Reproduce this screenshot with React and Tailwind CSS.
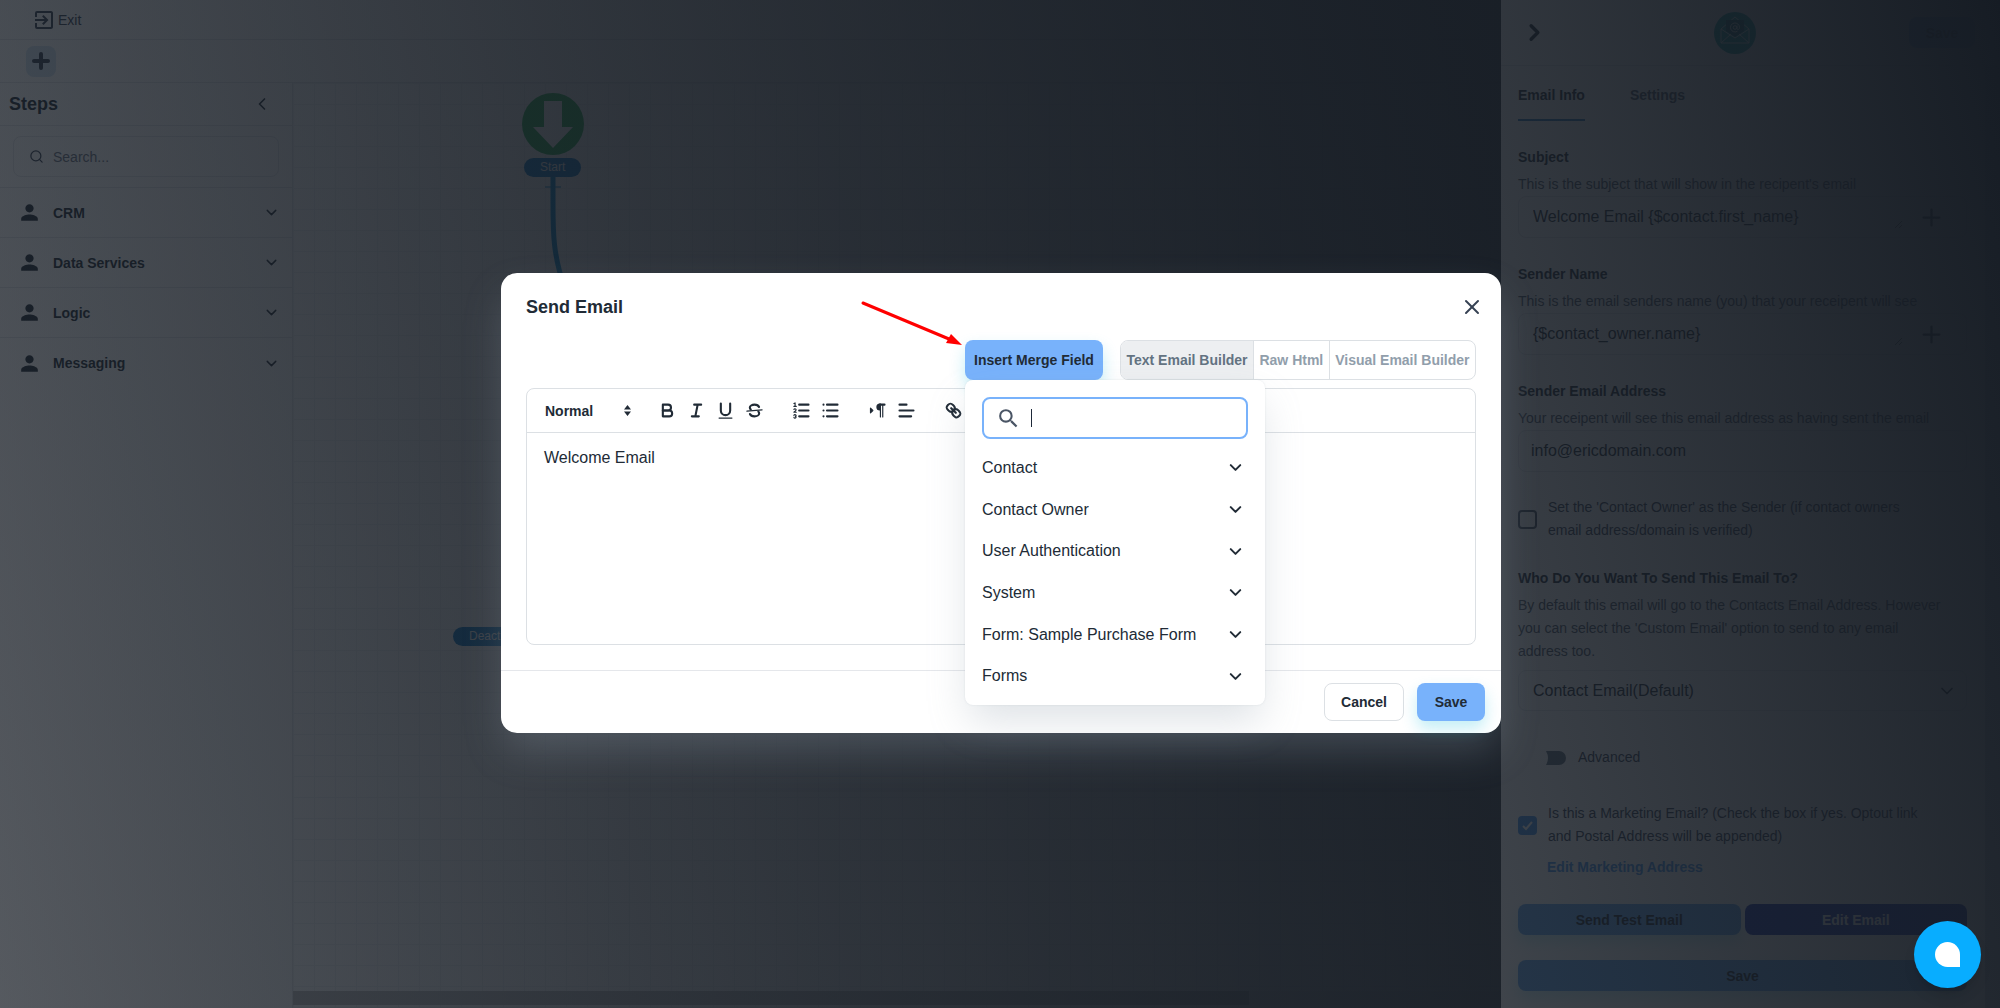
import React, { useState } from 'react';
import { MdOutlineExitToApp, MdPerson, MdSearch } from 'react-icons/md';
import { ChevronDown, ChevronLeft, ChevronRight, Plus, Search, X } from 'lucide-react';

const steps = ['CRM', 'Data Services', 'Logic', 'Messaging'];

const mergeGroups = [
    'Contact',
    'Contact Owner',
    'User Authentication',
    'System',
    'Form: Sample Purchase Form',
    'Forms',
];

const tabs = ['Text Email Builder', 'Raw Html', 'Visual Email Builder'];

// Both the drawer and the dialog dim what lies below them with this
const Backdrop = () => (
    <div className="absolute inset-0 bg-[linear-gradient(75deg,rgba(22,28,36,0.48)_0%,rgba(22,28,36,1)_100%)]" />
);

const Sidebar = () => (
    <aside className="w-[293px] shrink-0 border-r border-gray-200">
        <div className="flex h-[43px] items-center justify-between border-b border-gray-200 pl-[9px] pr-[20px]">
            <h2 className="text-lg font-bold">Steps</h2>
            <button aria-label="Collapse steps"><ChevronLeft size={20} /></button>
        </div>
        <div className="border-b border-gray-200 px-[13px] py-[10px]">
            <label className="flex h-[41px] items-center gap-[9px] rounded-lg border border-gray-200 px-[15px]">
                <Search size={15} className="shrink-0 text-gray-700" />
                <input className="w-full text-sm outline-none placeholder:text-gray-500" aria-label="Search steps" placeholder="Search..." />
            </label>
        </div>
        {steps.map((step) => (
            <button key={step} className="flex h-[50px] w-full items-center border-b border-gray-200 pl-[17px] pr-[12px] text-sm font-bold last:border-b-0">
                <MdPerson size={25} className="mr-[11px]" />
                {step}
                <ChevronDown size={17} className="ml-auto" />
            </button>
        ))}
    </aside>
);

const Canvas = () => (
    <div className="relative flex flex-1 flex-col justify-end bg-[linear-gradient(to_right,#f0f3f5_1px,transparent_1px),linear-gradient(to_bottom,#f0f3f5_1px,transparent_1px)] bg-[size:21px_21px]">
        <svg className="absolute left-[228px] top-[10px]" width="64" height="200" viewBox="0 0 64 200" fill="none">
            <path d="M32 82V110C32 140 32 162 44 196" stroke="#0288d1" strokeWidth="5" />
            <path d="M24 94H40" stroke="#0288d1" strokeWidth="1" />
            <circle cx="32" cy="31" r="31" fill="#22b14c" />
            <path d="M23 8H41V34H52L32 55L12 34H23Z" fill="#fff" />
        </svg>
        <span className="absolute left-[231px] top-[75px] rounded-full bg-[#0d7ac9] px-[16px] text-xs leading-[19px] text-white">Start</span>
        <span className="absolute left-[160px] top-[544px] rounded-full bg-[#0d7ac9] px-[16px] text-xs leading-[19px] text-white">Deactivated</span>
        <div className="mb-[3px] h-[14px] bg-[#f1f1f1]">
            <div className="h-full w-[56%] bg-[#c1c1c1]" />
        </div>
    </div>
);

const Workspace = () => (
    <div className="flex h-full flex-col">
        <header className="flex h-10 shrink-0 items-center border-b border-gray-200 px-8">
            <a href="#exit" className="flex items-center gap-[2px] text-sm text-gray-700">
                <MdOutlineExitToApp size={24} />
                Exit
            </a>
        </header>
        <div className="flex h-[43px] shrink-0 items-center border-b border-gray-200 px-[26px]">
            <button aria-label="Add" className="flex h-[31px] w-[30px] items-center justify-center rounded-lg bg-[#d5e6f5] text-gray-700">
                <Plus size={24} strokeWidth={4} />
            </button>
        </div>
        <div className="flex flex-1">
            <Sidebar />
            <Canvas />
        </div>
    </div>
);

const MergeInput = ({ label, hint, value }) => (
    <label className="block">
        <span className="block text-sm font-bold leading-[31px]">{label}</span>
        <span className="block text-sm leading-[23px] text-gray-600">{hint}</span>
        <span className="flex h-[42px] items-center rounded-lg border border-gray-200 pl-[14px]">
            <textarea rows={1} defaultValue={value} className="h-6 w-[370px] resize leading-6 outline-none" />
            <Plus size={27} strokeWidth={2} className="ml-[15px] shrink-0" />
        </span>
    </label>
);

const CheckRow = ({ checked, children }) => (
    <label className="flex items-center gap-[11px] pr-[42px] text-sm leading-[23px] text-gray-700">
        <span className="relative flex shrink-0">
            <input type="checkbox" defaultChecked={checked} className="peer size-[19px] appearance-none rounded border-2 border-gray-600 checked:border-[#4a98ee] checked:bg-[#4a98ee]" />
            <svg className="pointer-events-none absolute inset-0 hidden peer-checked:block" viewBox="0 0 19 19" fill="none">
                <path d="M5 10L8 13L14 6" stroke="#fff" strokeWidth="2" />
            </svg>
        </span>
        <span>{children}</span>
    </label>
);

const Drawer = () => (
    <aside className="absolute inset-y-0 right-0 flex w-[499px] flex-col bg-white">
        <div className="flex h-[66px] shrink-0 items-center justify-between border-b border-gray-200 pl-[20px] pr-[25px]">
            <button aria-label="Close panel"><ChevronRight size={27} strokeWidth={3} /></button>
            <svg className="ml-[12px]" width="42" height="42" viewBox="0 0 42 42" fill="none">
                <circle cx="21" cy="21" r="21" fill="#0aa5a0" />
                <path d="M7 17L21 5L35 17V31H7Z" stroke="#e0f2f1" />
                <path d="M12 8H30V19L21 25L12 19Z" fill="#0b6673" />
                <path d="M7 31L17 22M35 31L25 22M7 17L21 26L35 17" stroke="#e0f2f1" />
                <circle cx="21" cy="15.5" r="1.8" stroke="#e0f2f1" />
                <path d="M23 13.500V17C24 18.500 25.500 17 25.500 15.500A4.500 4.500 0 1 0 23.500 19.200" stroke="#e0f2f1" />
            </svg>
            <button className="h-[31px] w-[66px] rounded-lg bg-[#78b2fb] text-sm font-bold">Save</button>
        </div>
        <div className="flex flex-1">
            <div className="flex-1 pl-[17px] pr-[18px]">
                <div className="flex h-[55px] items-stretch gap-[45px] text-sm font-bold">
                    <button className="border-b-2 border-[#2b7bbd] pt-[4px]">Email Info</button>
                    <button className="border-b-2 border-transparent pt-[4px] text-gray-600">Settings</button>
                </div>
                <div className="mt-[21px] flex flex-col gap-[21px]">
                    <MergeInput label="Subject" hint="This is the subject that will show in the recipent's email" value="Welcome Email {$contact.first_name}" />
                    <MergeInput label="Sender Name" hint="This is the email senders name (you) that your receipent will see" value="{$contact_owner.name}" />
                    <label className="block">
                        <span className="block text-sm font-bold leading-[31px]">Sender Email Address</span>
                        <span className="block text-sm leading-[23px] text-gray-600">Your receipent will see this email address as having sent the email</span>
                        <input defaultValue="info@ericdomain.com" className="h-[42px] w-full rounded-lg border border-gray-200 px-3 outline-none" />
                    </label>
                </div>
                <div className="mt-[24px]">
                    <CheckRow>Set the 'Contact Owner' as the Sender (if contact owners email address/domain is verified)</CheckRow>
                </div>
                <label className="mt-[21px] block">
                    <span className="block text-sm font-bold leading-[31px]">Who Do You Want To Send This Email To?</span>
                    <span className="block pr-6 text-sm leading-[23px] text-gray-600">By default this email will go to the Contacts Email Address. However you can select the 'Custom Email' option to send to any email address too.</span>
                    <span className="relative mt-[7px] block">
                        <select className="h-[41px] w-full appearance-none rounded-lg border border-gray-200 px-[14px] outline-none">
                            <option>Contact Email(Default)</option>
                        </select>
                        <ChevronDown size={20} className="pointer-events-none absolute right-[10px] top-[11px]" />
                    </span>
                </label>
                <button className="mt-[35px] flex items-center gap-[12px] pl-[28px] text-sm leading-[23px] text-gray-700">
                    <svg width="20" height="14" viewBox="0 0 20 14" fill="#637381">
                        <path d="M0 0H13A7 7 0 0 1 13 14H0Q4 7 0 0Z" />
                    </svg>
                    Advanced
                </button>
                <div className="mt-[33px]">
                    <CheckRow checked>Is this a Marketing Email? (Check the box if yes. Optout link and Postal Address will be appended)</CheckRow>
                </div>
                <a href="#address" className="mt-[8px] block pl-[29px] text-sm font-bold leading-[23px] text-[#4a98ee]">Edit Marketing Address</a>
                <div className="mt-[25px] grid grid-cols-2 gap-x-1 gap-y-[25px] text-sm font-bold">
                    <button className="h-[31px] rounded-lg bg-[#66a8ee] shadow-[0_8px_16px_rgba(0,184,217,0.2)]">Send Test Email</button>
                    <button className="h-[31px] rounded-lg bg-[#2038b0] text-white">Edit Email</button>
                    <button className="col-span-2 h-[31px] rounded-lg bg-[#66a8ee] shadow-[0_8px_16px_rgba(0,184,217,0.2)]">Save</button>
                </div>
            </div>
            <div className="w-[15px] bg-gray-300" />
        </div>
    </aside>
);

const MergeMenu = () => (
    <div className="absolute left-0 top-full z-10 w-[300px] rounded-lg bg-white px-[17px] pb-[8px] pt-[17px] shadow-[0_20px_40px_-4px_rgba(145,158,171,0.3),0_0_2px_rgba(145,158,171,0.24)]">
        <label className="flex h-[42px] items-center gap-[10px] rounded-lg border-2 border-[#78b2fb] px-[12px]">
            <MdSearch size={25} className="shrink-0 text-gray-600" />
            <span className="h-[18px] w-px shrink-0 bg-gray-800" />
            <input aria-label="Search merge fields" className="w-full outline-none" />
        </label>
        <ul className="mt-[8px] flex h-[250px] flex-col">
            {mergeGroups.map((group) => (
                <li key={group} className="flex-1">
                    <button className="flex h-full w-full items-center justify-between pr-[3px]">
                        {group}
                        <ChevronDown size={19} strokeWidth={2.5} />
                    </button>
                </li>
            ))}
        </ul>
    </div>
);

const ToolButton = ({ label, children }) => (
    <button aria-label={label}>
        <svg width="21" height="21" viewBox="0 0 18 18" fill="none" stroke="currentColor" strokeWidth="1.8" strokeLinecap="round" strokeLinejoin="round">
            {children}
        </svg>
    </button>
);

const Toolbar = () => (
    <div className="flex h-[44px] items-center gap-[26px] border-b border-[#dce0e4] pl-[18px]">
        <button className="flex w-[86px] items-center justify-between text-sm font-bold">
            Normal
            <svg width="7" height="11" viewBox="0 0 7 11" fill="currentColor">
                <path d="M3.5 0L7 4.5H0ZM3.5 11L0 6.5H7Z" />
            </svg>
        </button>
        <div className="flex gap-[8px]">
            <ToolButton label="Bold">
                <path d="M5 4H9.500A2.500 2.500 0 0 1 9.500 9H5Z" />
                <path d="M5 9H10.500A2.500 2.500 0 0 1 10.500 14H5Z" />
            </ToolButton>
            <ToolButton label="Italic">
                <path d="M7 4H13M5 14H11M8 14L10 4" />
            </ToolButton>
            <ToolButton label="Underline">
                <path d="M5 3V9A4 4 0 0 0 13 9V3" />
                <path d="M3.500 15.500H14.500" strokeWidth="1" />
            </ToolButton>
            <ToolButton label="Strike">
                <path d="M15.500 8.500L2.500 9.500" strokeWidth="1" />
                <path d="M12.900 6C12.400 4.700 10.900 4 9 4C6.700 4 5 5.200 5 6.500C5 7.300 5.300 7.800 5.800 8.100M12.300 10C12.800 10.400 13 10.900 13 11.500C13 12.800 11.300 14 9 14C7.100 14 5.600 13.300 5.100 12" />
            </ToolButton>
        </div>
        <div className="flex gap-[8px]">
            <ToolButton label="Numbered list">
                <path d="M7 4H15M7 9H15M7 14H15" />
                <path d="M2.500 5.500H4.500M3.500 5.500V2.500L2.500 3M4.500 10.500H2.500C2.500 10.266 4.350 9.424 4.350 8.266A0.959 0.959 0 0 0 2.500 8.156M2.500 14.846A0.959 0.959 0 0 0 4.350 14.737A0.700 0.700 0 0 0 3.750 14A0.688 0.688 0 0 0 4.350 13.264A0.959 0.959 0 0 0 2.500 13.155" strokeWidth="1" />
            </ToolButton>
            <ToolButton label="Bulleted list">
                <path d="M6 4H15M6 9H15M6 14H15M3 4H3.010M3 9H3.010M3 14H3.010" />
            </ToolButton>
        </div>
        <div className="flex gap-[8px]">
            <ToolButton label="Text direction">
                <path d="M3 11L5 9L3 7Z" fill="currentColor" strokeWidth="1" />
                <path d="M11 3A3 3 0 0 0 11 9H12V3Z" fill="currentColor" stroke="none" />
                <path d="M11 4H15" />
                <path d="M11.500 4.500V14.500M13.500 4.500V14.500" strokeWidth="1" />
            </ToolButton>
            <ToolButton label="Align">
                <path d="M3 4H9M3 9H15M3 14H13" />
            </ToolButton>
        </div>
        <ToolButton label="Link">
            <path d="M7 7L11 11" />
            <path d="M8.900 4.577A3.476 3.476 0 0 1 9.260 9.256A3.476 3.476 0 0 1 4.577 8.900C3.185 7.500 2.035 6.400 4.217 4.217S7.500 3.185 8.900 4.577Z" />
            <path d="M13.423 9.100A3.476 3.476 0 0 0 8.744 8.740A3.476 3.476 0 0 0 9.104 13.419C10.496 14.811 11.604 15.961 13.783 13.779S14.815 10.500 13.423 9.100Z" />
        </ToolButton>
    </div>
);

const EmailDialog = () => {
    const [tab, setTab] = useState('Text Email Builder');

    return (
        <section role="dialog" aria-label="Send Email" className="relative w-full max-w-[1000px] rounded-2xl bg-white shadow-[0_20px_40px_-4px_rgba(145,158,171,0.3)]">
            <div className="flex h-[67px] items-center justify-between pl-[25px] pr-[17px]">
                <h1 className="text-lg font-bold">Send Email</h1>
                <button aria-label="Close"><X size={24} className="text-gray-700" /></button>
            </div>
            <div className="flex justify-end gap-[17px] px-[25px]">
                <div className="relative">
                    <button className="h-10 w-[138px] rounded-lg bg-[#78b2fb] text-sm font-bold shadow-[0_8px_16px_rgba(0,184,217,0.24)]">Insert Merge Field</button>
                    <MergeMenu />
                </div>
                <div className="flex h-10 w-[356px] overflow-hidden rounded-lg border border-[#dce0e4] text-sm font-bold text-[#919eab]">
                    {tabs.map((name) => (
                        <button
                            key={name}
                            onClick={() => setTab(name)}
                            className={`grow whitespace-nowrap border-r border-[#dce0e4] px-1 last:border-r-0 ${tab === name ? 'bg-[#edeff1] text-[#637381]' : ''}`}
                        >
                            {name}
                        </button>
                    ))}
                </div>
            </div>
            <div className="mx-[25px] mt-[8px] rounded-lg border border-[#dce0e4]">
                <Toolbar />
                <textarea aria-label="Email body" defaultValue="Welcome Email" className="block h-[211px] w-full resize-none px-[17px] py-[13px] leading-6 outline-none" />
            </div>
            <div className="mt-[25px] flex justify-end gap-[13px] border-t border-gray-200 px-[16px] pb-[12px] pt-[12px] text-sm font-bold">
                <button className="h-[38px] rounded-lg border border-[#dce0e4] px-[16px]">Cancel</button>
                <button className="h-[38px] w-[68px] rounded-lg bg-[#78b2fb] shadow-[0_8px_16px_rgba(0,184,217,0.24)]">Save</button>
            </div>
            {/* Pointer to the merge field button */}
            <svg className="absolute left-[360px] top-[28px]" width="102" height="46" viewBox="0 0 102 46">
                <path d="M2 2L88 38" stroke="#f00" strokeWidth="3" strokeLinecap="round" />
                <path d="M101 44L85 42L90 33Z" fill="#f00" />
            </svg>
        </section>
    );
};

const App = () => (
    <div className="relative h-screen overflow-hidden bg-white font-['Liberation_Sans',Arial,sans-serif] text-base text-[#212b36]">
        <Workspace />
        <Backdrop />
        <Drawer />
        <Backdrop />
        <div className="absolute inset-0 flex items-center justify-center pb-[2px] pl-[2px]">
            <EmailDialog />
        </div>
        <button aria-label="Open chat" className="absolute bottom-[20px] right-[19px] flex size-[67px] items-center justify-center rounded-full bg-[#08adff] shadow-lg">
            <span className="size-[25px] rounded-full rounded-br-none bg-white" />
        </button>
    </div>
);

export default App;
